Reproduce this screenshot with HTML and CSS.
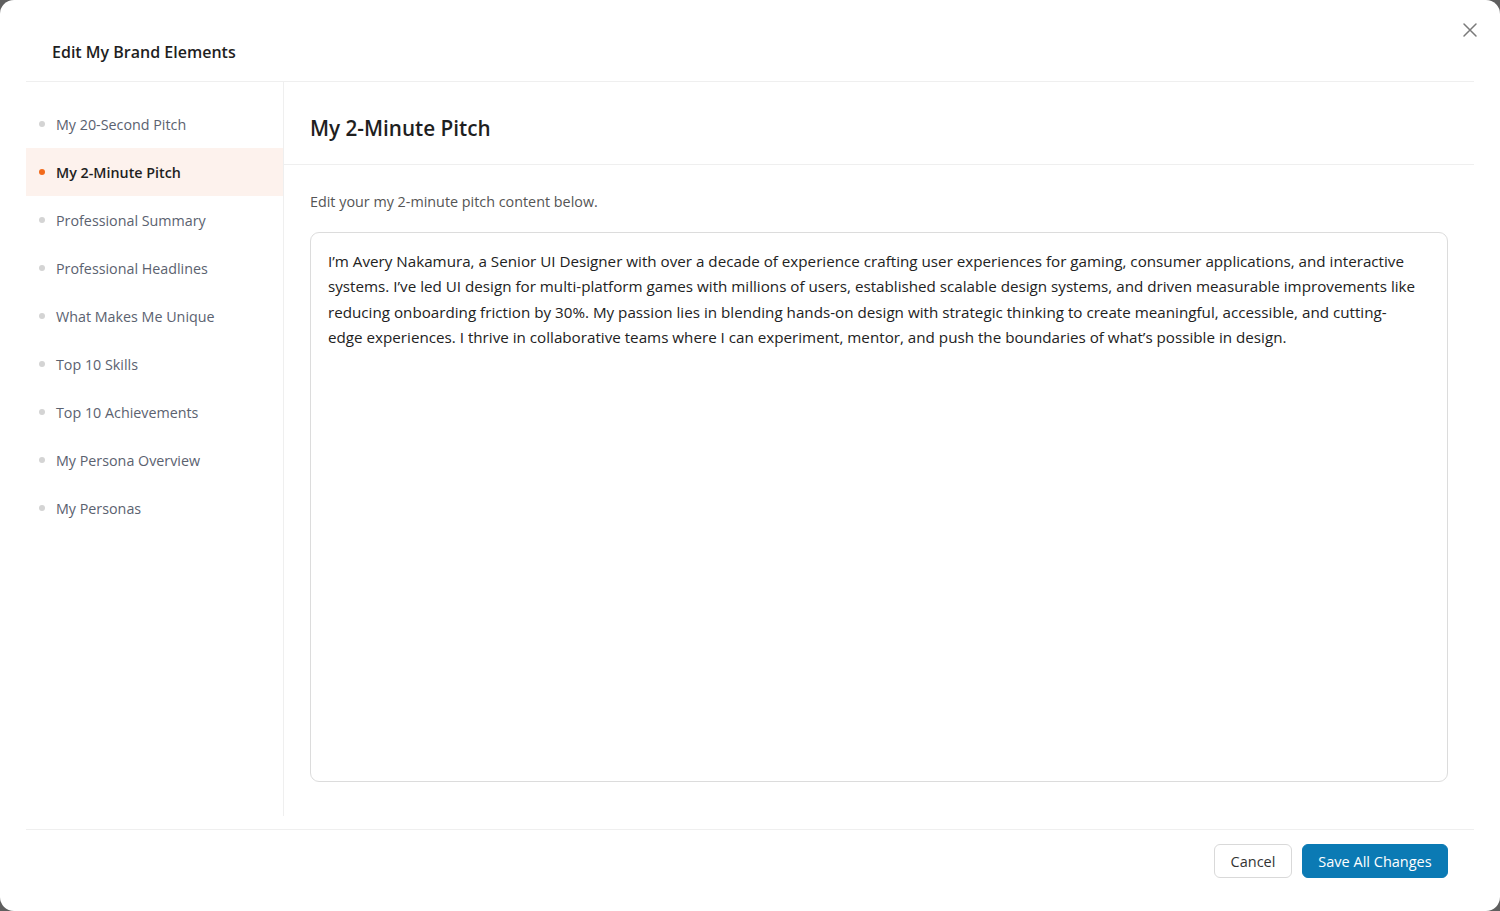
FILE: index.html
```html
<!DOCTYPE html>
<html lang="en">
<head>
    <meta charset="UTF-8">
    <meta name="viewport" content="width=device-width, initial-scale=1.0">
    <title>Edit My Brand Elements</title>
    <link rel="stylesheet" href="styles.css">
</head>
<body>
    <div class="modal">
        <div class="modal-header">
            <div class="modal-title">Edit My Brand Elements</div>
            <button class="close-btn" aria-label="Close">
                <svg width="16" height="16" viewBox="0 0 16 16">
                    <path d="M2 2 L14 14 M14 2 L2 14" stroke="#7a7a7a" stroke-width="1.5" stroke-linecap="round" fill="none"/>
                </svg>
            </button>
        </div>
        <div class="modal-body">
            <ul class="side-nav">
                <li class="nav-item"><span class="dot"></span>My 20-Second Pitch</li>
                <li class="nav-item active"><span class="dot"></span>My 2-Minute Pitch</li>
                <li class="nav-item"><span class="dot"></span>Professional Summary</li>
                <li class="nav-item"><span class="dot"></span>Professional Headlines</li>
                <li class="nav-item"><span class="dot"></span>What Makes Me Unique</li>
                <li class="nav-item"><span class="dot"></span>Top 10 Skills</li>
                <li class="nav-item"><span class="dot"></span>Top 10 Achievements</li>
                <li class="nav-item"><span class="dot"></span>My Persona Overview</li>
                <li class="nav-item"><span class="dot"></span>My Personas</li>
            </ul>
            <div class="editor">
                <div class="editor-head">My 2-Minute Pitch</div>
                <div class="editor-body">
                    <p class="hint">Edit your my 2-minute pitch content below.</p>
                    <textarea class="pitch-text">I’m Avery Nakamura, a Senior UI Designer with over a decade of experience crafting user experiences for gaming, consumer applications, and interactive
systems. I’ve led UI design for multi-platform games with millions of users, established scalable design systems, and driven measurable improvements like
reducing onboarding friction by 30%. My passion lies in blending hands-on design with strategic thinking to create meaningful, accessible, and cutting-
edge experiences. I thrive in collaborative teams where I can experiment, mentor, and push the boundaries of what’s possible in design.</textarea>
                </div>
            </div>
        </div>
        <div class="modal-footer">
            <button class="btn btn-cancel">Cancel</button>
            <button class="btn btn-save">Save All Changes</button>
        </div>
    </div>
</body>
</html>
```
FILE: styles.css
```css
* {
    box-sizing: border-box;
}
body {
    margin: 0;
    background-color: #5f5f5f;
    font-family: "Open Sans", "Noto Sans", sans-serif;
    color: #1f1f1f;
}
.modal {
    position: relative;
    width: 1500px;
    height: 911px;
    background-color: #fff;
    border-radius: 14px;
    display: flex;
    flex-direction: column;
}
.modal-header {
    margin: 0 26px;
    height: 82px;
    padding: 38px 0 0 26px;
    border-bottom: 1px solid #efefef;
}
.modal-title {
    font-size: 16px;
    font-weight: 600;
    line-height: 28px;
}
.close-btn {
    position: absolute;
    top: 22px;
    right: 22px;
    width: 16px;
    height: 16px;
    padding: 0;
    border: none;
    background: none;
}
.modal-body {
    display: flex;
    height: 747px;
    margin: 0 26px;
}
.side-nav {
    list-style: none;
    margin: 0 0 13px 0;
    padding: 18px 0 0 0;
    width: 258px;
    border-right: 1px solid #efefef;
}
.nav-item {
    display: flex;
    align-items: center;
    height: 48px;
    padding-left: 13px;
    font-size: 14.3px;
    color: #5b6270;
}
.nav-item .dot {
    width: 6px;
    height: 6px;
    border-radius: 50%;
    background-color: #d4d4d4;
    margin-right: 11px;
}
.nav-item.active {
    background-color: #fdf2ed;
    color: #1f1f1f;
    font-weight: 600;
}
.nav-item.active .dot {
    background-color: #f26a1b;
}
.editor {
    flex: 1;
    display: flex;
    flex-direction: column;
}
.editor-head {
    height: 83px;
    padding: 32px 0 0 26px;
    border-bottom: 1px solid #efefef;
    font-size: 20.7px;
    font-weight: 600;
    line-height: 28px;
}
.editor-body {
    padding: 26px 26px 0 26px;
}
.hint {
    margin: 0 0 19px 0;
    font-size: 14.35px;
    line-height: 22px;
    color: #555;
}
.pitch-text {
    display: block;
    width: 100%;
    height: 550px;
    padding: 16px 17px;
    border: 1px solid #dcdcdc;
    border-radius: 9px;
    font-family: "Open Sans", "Noto Sans", sans-serif;
    font-size: 15.2px;
    line-height: 25.3px;
    color: #222;
    resize: none;
    outline: none;
    white-space: pre;
    overflow: hidden;
}
.modal-footer {
    margin: 0 26px;
    border-top: 1px solid #efefef;
    padding: 14px 26px 0 0;
    display: flex;
    justify-content: flex-end;
    gap: 10px;
}
.btn {
    height: 34px;
    border-radius: 6px;
    font-family: "Open Sans", "Noto Sans", sans-serif;
    font-size: 14.5px;
    padding: 0;
}
.btn-cancel {
    width: 78px;
    background-color: #fff;
    border: 1px solid #d9d9d9;
    color: #333;
}
.btn-save {
    width: 146px;
    background-color: #0b7ab4;
    border: 1px solid #0b7ab4;
    color: #fff;
}
```
